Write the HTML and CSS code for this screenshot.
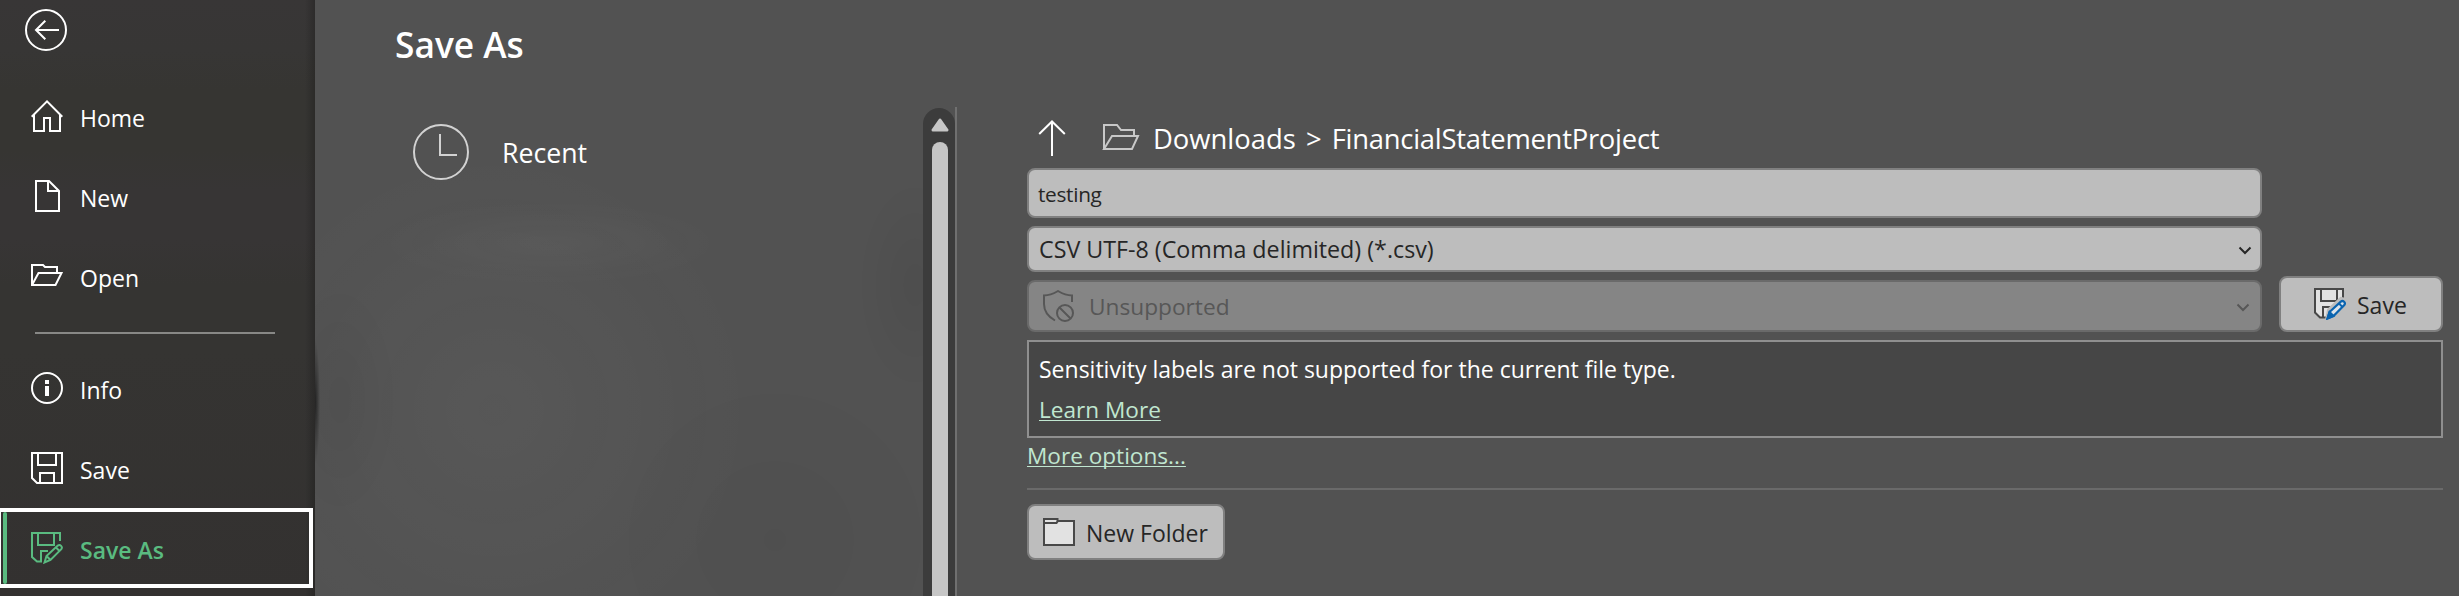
FILE: index.html
```html
<!DOCTYPE html>
<html lang="en">
<head>
<meta charset="utf-8">
<title>Save As</title>
<link rel="stylesheet" href="styles.css">
</head>
<body>
<div class="backstage">
  <nav class="sidebar">
    <button class="back" aria-label="Back">
      <svg width="42" height="42" viewBox="0 0 42 42" fill="none" stroke="#fff" stroke-width="2"><circle cx="21" cy="21" r="20"/><path d="M34 21H11M20.300 11.700L11 21l9.300 9.300"/></svg>
    </button>
    <a class="item"><svg class="icon" viewBox="0 0 32 32"><path d="M.7 16.700L16 1.400l15.300 15.300M3 14.500V31h10V18h6v13h10V14.500"/></svg><span>Home</span></a>
    <a class="item"><svg class="icon" viewBox="0 0 32 32"><path d="M5 1h13l10 10v20H5zM17 1v10h11"/></svg><span>New</span></a>
    <a class="item"><svg class="icon" viewBox="0 0 32 32"><path d="M1 25V5h11l2 2h12v6M1 25l6.500-12H30.500L24.500 25z"/></svg><span>Open</span></a>
    <hr class="divider">
    <a class="item"><svg class="icon" viewBox="0 0 32 32"><circle cx="16" cy="16" r="15"/><path d="M16 8v4M16 14v10" stroke-width="4"/></svg><span>Info</span></a>
    <a class="item"><svg class="icon" viewBox="0 0 32 32"><path d="M1 1h30v30H6L1 26zM7 1v12h18V1M9 31V21h14v10"/></svg><span>Save</span></a>
    <a class="item active"><svg class="icon" viewBox="0 0 32 32"><path d="M29 9V1H1v24l5 4.500h4V19h7M7 1v12h16V1"/><path d="M13.500 30.500l2-6.500L26.800 13.600a2.500 2.500 0 0 1 3.500 3.500L19.500 28zM15.500 24l4 4M25 15.500l3.500 3.500"/></svg><span>Save As</span></a>
  </nav>

  <main class="content">
    <section class="places">
      <h1>Save As</h1>
      <div class="places-body">
        <div class="place-list">
          <a class="place"><svg width="56" height="56" viewBox="0 0 56 56" fill="none" stroke="#d2d2d2" stroke-width="2"><circle cx="28" cy="28" r="27"/><path d="M27 10v21h17"/></svg><span>Recent</span></a>
        </div>
        <div class="scrollbar">
          <svg width="18" height="14" viewBox="0 0 18 14"><path d="M9 2l7 10H2z" fill="#c6c6c6" stroke="#c6c6c6" stroke-width="3" stroke-linejoin="round"/></svg>
          <div class="thumb"></div>
        </div>
      </div>
    </section>

    <section class="save-form">
      <div class="path">
        <svg class="up" width="28" height="36" viewBox="0 0 28 36" fill="none" stroke="#fff" stroke-width="2"><path d="M14 36V1.500M1.200 14L14 1.500 26.800 14"/></svg>
        <svg class="folder" width="38" height="28" viewBox="0 0 38 28" fill="none" stroke="#c8c8c8" stroke-width="2"><path d="M2 26V2h13l4 5h13v6M2 26l8-13h26l-6 13z"/></svg>
        <span class="crumbs">Downloads &gt; <span class="current">FinancialStatementProject</span></span>
      </div>
      <div class="fields">
        <div class="inputs">
          <div class="field name"><span>testing</span></div>
          <div class="field type"><span>CSV UTF-8 (Comma delimited) (*.csv)</span><svg class="chevron" viewBox="0 0 14 9"><path d="M1.500 1.500L7 7l5.500-5.500"/></svg></div>
          <div class="field label"><svg class="shield" width="32" height="32" viewBox="0 0 32 32" fill="none" stroke="#575757" stroke-width="2"><path d="M29 12V5.500C23 5.500 20 4 15 1 10 4 7 5.500 1 5.500V14c0 8 4 12.500 11 16.500"/><circle cx="22" cy="23" r="8"/><path d="M16.500 17.500l11 11"/></svg><span>Unsupported</span><svg class="chevron" viewBox="0 0 14 9"><path d="M1.500 1.500L7 7l5.500-5.500"/></svg></div>
        </div>
        <button class="btn save"><svg width="32" height="32" viewBox="0 0 32 32" fill="none" stroke="#484848" stroke-width="2"><path d="M1 1h28v12L16 29.500H6L1 24.500z" fill="#e2e2e2" stroke="none"/><path d="M29 11V1H1v23.500l5 5h6M7 1v12h16V1M9 29V19h9"/><path d="M13 32L15 22 27 11l5 1" fill="none" stroke="#bdbdbd" stroke-width="4"/><path d="M13.500 30.500l2-6.500L26.800 13.600a2.500 2.500 0 0 1 3.500 3.500L19.500 28z" fill="#dce4ec" stroke="#0a64b0" stroke-width="2.200"/><path d="M13.500 30.500l2-6.500 4 4zM25 15.500l3.500 3.500" fill="#0a64b0" stroke="#0a64b0"/></svg><span>Save</span></button>
      </div>
      <div class="notice"><p>Sensitivity labels are not supported for the current file type.</p><p><a class="link learn">Learn More</a></p></div>
      <div class="more"><a class="link">More options...</a></div>
      <button class="btn new-folder"><svg width="32" height="28" viewBox="0 0 32 28" stroke="#484848" stroke-width="2"><path d="M1 1h13.500v2H31v24H1z" fill="#e2e2e2"/><path d="M1 5h12.500l1.500-2" fill="none"/></svg><span>New Folder</span></button>
    </section>
  </main>
</div>
</body>
</html>
```
FILE: styles.css
```css
* { box-sizing: border-box; }

body {
  margin: 0;
  background: #525252;
  color: #fff;
  font: 23px/32px "Open Sans", "Noto Sans", sans-serif;
  overflow: hidden;
}

button { font: inherit; margin: 0; }
svg { display: block; flex: none; }

.backstage { display: flex; height: 596px; }

/* Sidebar */
.sidebar {
  width: 315px;
  flex: none;
  background:
    linear-gradient(to right, transparent 305px, rgba(0, 0, 0, .2)),
    linear-gradient(#383636 0, #373635 50px, #363532 90px, #363532 150px, #373535 190px, #373535 240px, #353432 285px, #353432 350px, #333130 596px);
}

.back {
  display: block;
  height: 67px;
  margin-bottom: 9px;
  padding: 0 0 7px 25px;
  border: 0;
  background: none;
}

.item {
  display: flex;
  align-items: center;
  height: 80px;
  padding-left: 31px;
}

.item span { margin-left: 17px; padding-top: 3px; }

.icon {
  width: 32px;
  height: 32px;
  fill: none;
  stroke: #fff;
  stroke-width: 2;
}

.divider {
  width: 240px;
  height: 2px;
  margin: 16px 0 14px 35px;
  border: 0;
  background: #888886;
}

.active {
  width: 316px;
  margin-left: -3px;
  border: 4px solid #fff;
  padding-left: 2px;
  color: #5abb80;
  font-weight: 600;
}

.active::before {
  content: "";
  width: 4px;
  height: 72px;
  margin-right: 24px;
  border-radius: 2px;
  background: #5abb80;
}

.active .icon { stroke: #5abb80; }

/* Content */
.content { display: flex; flex: 1; }

.places {
  display: flex;
  flex-direction: column;
  width: 642px;
  border-image: linear-gradient(transparent 108px, #707070 108px) 1;
  border-style: solid;
  border-width: 0 2px 0 0;
  background:
    radial-gradient(ellipse 170px 42px at 235px 243px, rgba(255, 255, 255, .03), transparent),
    radial-gradient(ellipse 260px 260px at 180px 410px, rgba(255, 255, 255, .03), transparent),
    radial-gradient(ellipse 60px 110px at 600px 285px, rgba(0, 0, 0, .05), transparent),
    radial-gradient(ellipse 180px 180px at 460px 540px, rgba(0, 0, 0, .03), transparent),
    radial-gradient(ellipse 5px 62px at 0 402px, rgba(0, 0, 0, .6), transparent),
    radial-gradient(ellipse 60px 120px at 25px 400px, rgba(0, 0, 0, .05), transparent);
}

h1 {
  height: 108px;
  margin: 0;
  padding: 20px 0 0 80px;
  font-size: 35.300px;
  line-height: 48px;
  font-weight: 600;
}

.places-body { display: flex; flex: 1; }
.place-list { flex: 1; padding: 16px 0 0 98px; }

.place {
  display: flex;
  align-items: center;
  gap: 33px;
  font-size: 26.700px;
}

.place span { padding-top: 2px; }

.scrollbar {
  display: flex;
  flex-direction: column;
  align-items: center;
  width: 32px;
  padding: 10px 0 0 2px;
  border-radius: 16px 16px 0 0;
  background: #3c3c3c;
}

.thumb {
  flex: 1;
  width: 16px;
  margin-top: 10px;
  border-radius: 8px 8px 0 0;
  background: #c6c6c6;
}

/* Save form */
.save-form { flex: 1; padding: 108px 16px 0 70px; }

.path {
  display: flex;
  align-items: center;
  height: 60px;
  padding-left: 11px;
  font-size: 27.400px;
}

.folder { margin: 0 13px 2px 36px; }
.crumbs { padding-top: 1px; word-spacing: 3px; }
.current { letter-spacing: -.25px; }

.fields { display: flex; align-items: flex-end; gap: 17px; }

.inputs {
  display: flex;
  flex: 1;
  flex-direction: column;
  gap: 8px;
}

.field {
  display: flex;
  align-items: center;
  border: 2px solid #808080;
  border-radius: 8px;
  padding-left: 10px;
  background: #bdbdbd;
  color: #262626;
}

.name { height: 50px; padding-left: 9px; font-size: 20.800px; }
.name span { padding-top: 1px; letter-spacing: -.3px; }
.type { height: 46px; font-size: 23.250px; }
.type span { padding: 1px 0 1px; }

.label {
  height: 52px;
  padding-left: 14px;
  border-color: #6a6a6a;
  background: #858585;
  color: #575757;
}

.label span { margin-left: 14px; padding-top: 1px; font-size: 22.700px; }

.chevron {
  width: 14px;
  height: 9px;
  margin: 2px 8px 0 auto;
  fill: none;
  stroke: #262626;
  stroke-width: 2;
}

.label .chevron { margin-right: 10px; stroke: #575757; }

.btn {
  display: flex;
  align-items: center;
  height: 56px;
  border: 2px solid #808080;
  border-radius: 8px;
  background: #bdbdbd;
  color: #262626;
}

.btn span { padding-top: 2px; }
.save { width: 164px; padding: 0 0 0 33px; }
.save span { margin-left: 11px; }

.notice {
  height: 98px;
  margin-top: 8px;
  padding: 11px 10px;
  border: 2px solid #8f8f8f;
  background: #464646;
}

.notice p { margin: 0; height: 40px; }

.link {
  color: #c0e6d0;
  font-size: 22.600px;
  text-decoration: underline;
  text-decoration-thickness: 1px;
  text-underline-offset: 2px;
  text-decoration-skip-ink: none;
}

.more {
  height: 52px;
  padding-top: 1px;
  border-bottom: 2px solid #6a6a6a;
}

.new-folder { width: 198px; margin-top: 14px; padding: 0 0 0 14px; }
.new-folder span { margin-left: 11px; }
```
